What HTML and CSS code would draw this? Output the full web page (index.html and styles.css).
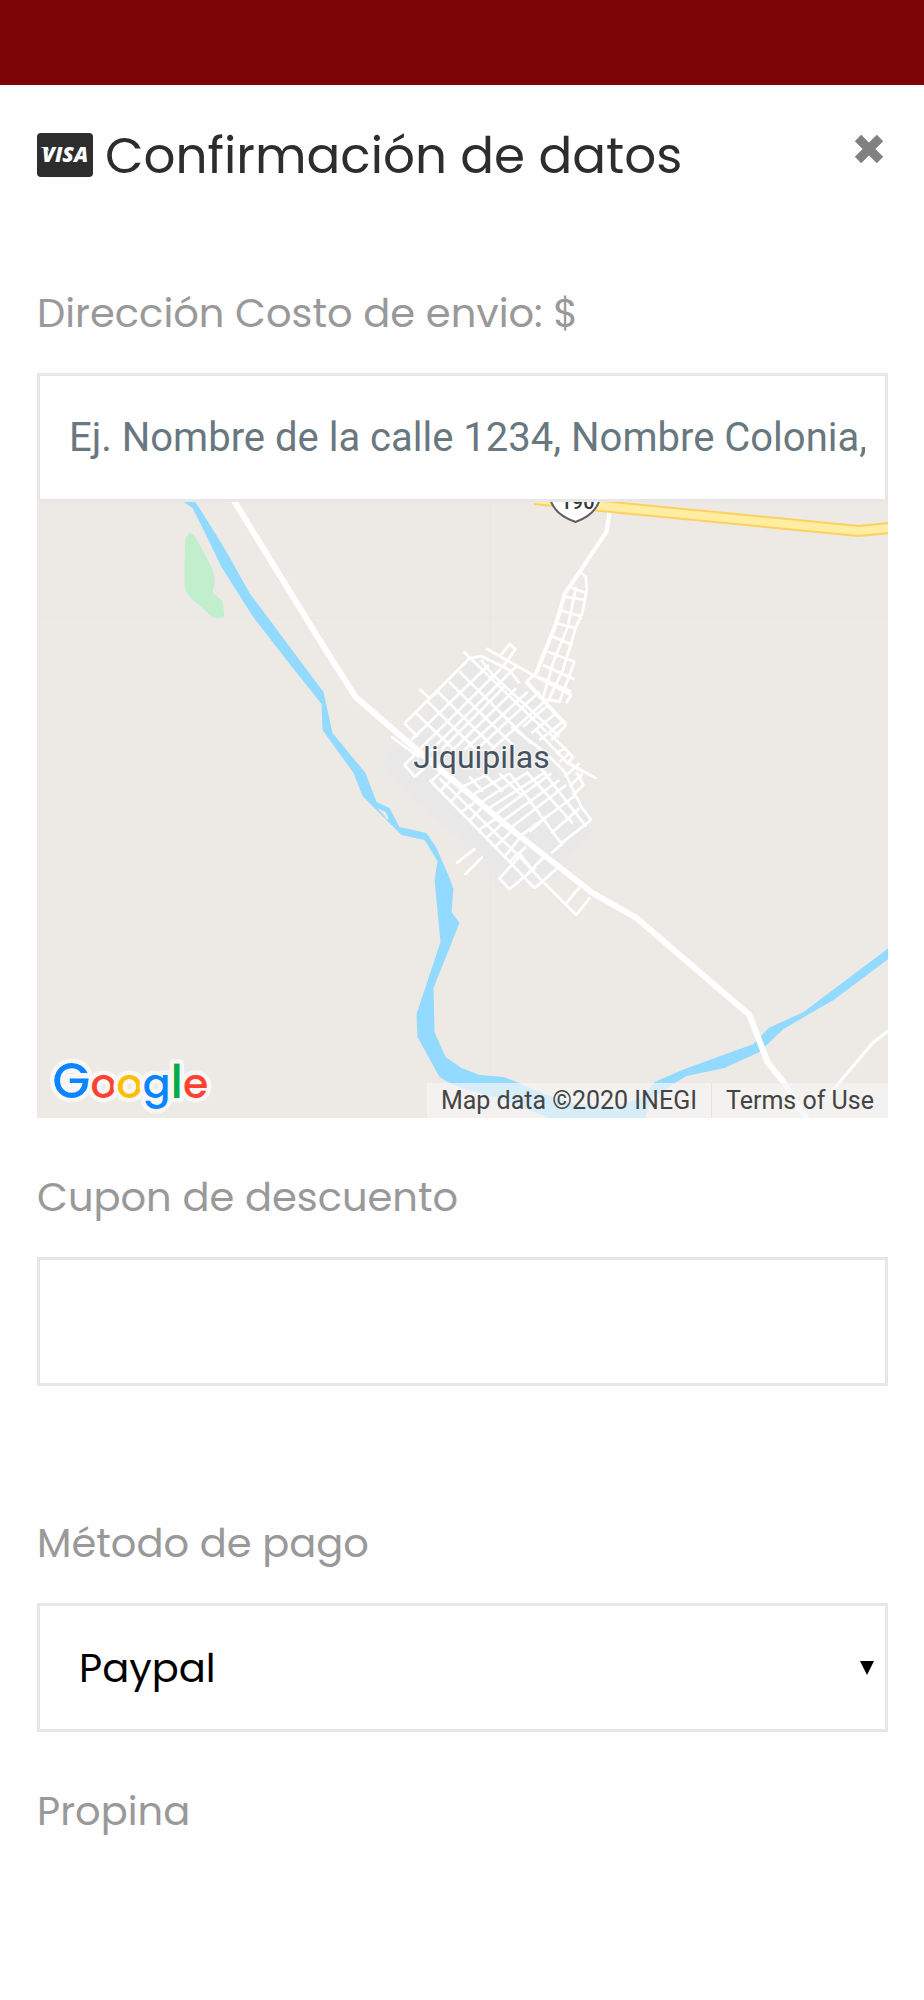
FILE: index.html
```html
<!DOCTYPE html>
<html lang="es">
<head>
<meta charset="utf-8">
<meta name="viewport" content="width=device-width, initial-scale=1">
<title>Confirmación de datos</title>
<link rel="stylesheet" href="styles.css">
</head>
<body>
<div class="topbar"></div>
<main class="sheet">
  <header class="header">
    <svg class="visa" viewBox="0 0 56 44" aria-hidden="true">
      <rect width="56" height="44" rx="4" fill="#2d2d2d"/>
      <path d="M3 14h8l1 4-3-2z" fill="#fff"/>
      <text class="visa-text" x="5" y="29">VISA</text>
    </svg>
    <h1 class="title">Confirmación de datos</h1>
    <button class="close" type="button" aria-label="Cerrar">
      <svg viewBox="0 0 30 30"><path d="M4 4L26 26M26 4L4 26" stroke="#808080" stroke-width="9"/></svg>
    </button>
  </header>
  <form class="form">
    <div class="field">
      <label class="label" for="address">Dirección Costo de envio: $</label>
      <input class="control address" id="address" type="text" placeholder="Ej. Nombre de la calle 1234, Nombre Colonia, Ciudad">
      <div class="map">
        <svg class="map-canvas" viewBox="37 502 852 616" preserveAspectRatio="xMidYMid slice" role="img" aria-label="Mapa de Jiquipilas">
          <defs><filter id="soft"><feGaussianBlur stdDeviation="4"/></filter></defs>
          <rect x="37" y="502" width="852" height="616" fill="#edeae5"/>
          <path d="M37 618H889M491 502V1118" stroke="#e9e7e2" stroke-width="1"/>
          <path fill="#c1eecd" d="M190 533Q193 533 195 536L203 550 212 567Q216 576 215 584L213 592 217 596 223 601 225 617Q219 619 213 617L190 597Q185 590 185 585V560L186 538Z"/>
          <path filter="url(#soft)" fill="#e8e8e8" d="M470 660L525 685 560 720 548 752 588 808 594 832 550 882 508 888 470 850 384 768 388 748 412 735Z"/>
          <path fill="#92daff" fill-rule="evenodd" d="M184 502H196L215 532 230 557 250 593 268 617 300 660 324 692 333 733 366 773 377 802 390 808 400 827 427 833 437 848 450 878 454 889 452 912 460 923 434 988 435 1032 446 1057 462 1068 480 1075 504 1077 517 1082 542 1093 575 1104 615 1106 642 1098 655 1082 685 1069 754 1044 769 1028 804 1012 889 948V959L834 1000 784 1029 760 1052 725 1068 687 1076 677 1082 654 1097 645 1118H550L499 1098 462 1088 448 1082 440 1077 418 1037 417 1014 441 942 435 880 438 861 425 840 402 835 363 796 354 773 323 730 322 704 287 660 253 616 222 567 200 522 193 508ZM378 808L386 812 389 818 388 820Z"/>
          <g transform="translate(360 620) scale(.33333)" fill="none" stroke="#fff" stroke-width="8" stroke-linejoin="round">
            <path d="M135 310L330 115M155 360L388 135M183 385L425 145M210 395L475 135M245 390L435 200M280 390L470 205M315 390L505 215M350 390L540 215M395 390L560 240M490 320L560 260M515 340L590 280M540 360L610 305M575 360L620 315"/>
            <path d="M135 310L175 350M170 280L285 390M205 245L350 390M180 208L210 235 235 215 405 385M268 185L465 380M300 155L515 370M312 95L560 335M330 115L365 108 450 150 480 190M380 85L520 165 635 225M425 105L450 72 468 88 430 140M365 120L400 165 600 350"/>
            <path d="M455 320L560 400 615 455 665 560 695 600M530 330L620 425 710 475M570 340L640 410 625 430 670 455M590 400L615 385M600 425L630 400M615 470L660 430M630 500L670 460M650 455L672 495 640 525"/>
            <path d="M215 485L245 455M245 510L275 480M275 545L315 500M300 580L345 548M328 605L370 560M355 632L410 595M380 655L430 610M408 680L460 630M435 710L480 655M300 505L380 465M330 530L450 460M360 550L500 460M380 570L560 455M400 590L575 460M420 610L600 480M445 630L620 495M480 650L650 525M510 635L545 605"/>
            <path d="M210 480L450 725 525 805M240 475L480 710 550 785M270 470L310 510M330 470L370 515M370 460L430 515M420 460L490 530M450 460L605 670M500 455L640 610M540 440L680 620M575 640L660 565M605 670L695 600M575 700L610 670"/>
            <path d="M450 725L500 680M480 710L420 775 450 808 530 740M495 770L560 705M525 805L590 748M550 785L650 885 692 832M620 850L660 802M95 350L180 412M165 405L135 435 165 470 195 445M290 730L348 685M315 765L370 710M480 700L530 765"/>
            <path d="M751 -330L741 -265 661 -145 616 -80 590 10 530 160 500 185M661 -145L679 -130 682 -90 668 -20 650 20 610 150 565 245M650 -100L625 20 580 130 550 235M645 125L600 245 560 238M635 225L620 250M630 -100L680 -80M615 -70L680 -60M600 -30L668 -10M592 10L650 25M580 50L640 75M565 95L645 125M550 135L645 178M535 170L635 215"/>
            <path d="M500 185L620 315M751 -330L741 -265 661 -145 616 -80 590 10 530 160" stroke-width="12"/>
          </g>
          <path fill="none" stroke="#fff" stroke-width="6" stroke-linejoin="round" d="M234 500L320 640 356 697 420 752 515 832 593 893 637 918 750 1015 768 1062 784 1082 808 1120"/>
          <path fill="none" stroke="#fff" stroke-width="3" d="M890 1030L874 1042 830 1094"/>
          <path fill="none" stroke="#ffd060" stroke-width="12" d="M535 499L602 506 859 531 890 528"/>
          <path fill="none" stroke="#ffeda1" stroke-width="8" d="M535 499L602 506 859 531 890 528"/>
          <path fill="#fff" stroke="#5f5f5f" stroke-width="2" d="M550 496Q553 514 576 522 598 514 601 496Z"/>
          <text class="road-number" x="578" y="509">190</text>
          <text class="town" x="482" y="768">Jiquipilas</text>
          <text class="google" x="53" y="1098"><tspan class="google-cap" fill="#0a84ff">G</tspan><tspan fill="#ff4131">o</tspan><tspan fill="#ffbd00">o</tspan><tspan fill="#0a84ff">g</tspan><tspan class="google-tall" fill="#00ac47">l</tspan><tspan fill="#ff4131">e</tspan></text>
        </svg>
        <div class="credits">
          <span class="credit">Map data ©2020 INEGI</span>
          <a class="credit" href="#terms">Terms of Use</a>
        </div>
      </div>
    </div>
    <div class="field field-coupon">
      <label class="label" for="coupon">Cupon de descuento</label>
      <input class="control" id="coupon" type="text">
    </div>
    <div class="field">
      <label class="label" for="payment">Método de pago</label>
      <div class="select-wrap">
        <select class="control select" id="payment"><option>Paypal</option></select>
        <svg class="arrow" viewBox="0 0 14 14" aria-hidden="true"><path d="M0 0H14L7 14Z"/></svg>
      </div>
    </div>
    <div class="field">
      <span class="label">Propina</span>
    </div>
  </form>
</main>
</body>
</html>
```
FILE: styles.css
```css
* { box-sizing: border-box; }

body {
  margin: 0;
  background: #fefefe;
  font-family: Poppins, Inter, sans-serif;
}

.topbar {
  height: 85px;
  background: #7d0507;
}

.sheet { padding: 39px 36px 40px 37px; }

.header {
  display: flex;
  align-items: flex-start;
  gap: 12px;
  padding-bottom: 95px;
}

.visa {
  width: 56px;
  height: 44px;
  margin-top: 9px;
}

.visa-text {
  font: italic 800 21px "Open Sans", sans-serif;
  fill: #fff;
}

.title {
  flex: 1;
  margin: 0;
  font-size: 50px;
  font-weight: 400;
  line-height: 64px;
  color: #2d2d2d;
}

.close {
  padding: 0;
  margin: 10px 4px 0 0;
  border: 0;
  background: none;
}

.close svg {
  display: block;
  width: 30px;
  height: 30px;
}

.form {
  display: flex;
  flex-direction: column;
  gap: 49px;
}

.field {
  display: flex;
  flex-direction: column;
}

.field-coupon { padding-bottom: 78px; }

.label {
  margin-bottom: 30px;
  font-size: 40px;
  font-weight: 400;
  line-height: 60px;
  color: #999;
}

.control {
  width: 100%;
  height: 129px;
  padding: 0 29px;
  border: 3px solid #e7e7e7;
  border-radius: 0;
  background: #fff;
  color: #000;
  font-family: Poppins, Inter, sans-serif;
  font-size: 40px;
}

.address {
  padding-right: 20px;
  font-family: Roboto, sans-serif;
}

.address::placeholder {
  color: #687780;
  opacity: 1;
}

.map {
  position: relative;
  height: 616px;
}

.map-canvas {
  display: block;
  width: 100%;
  height: 100%;
}

.road-number {
  font: 500 20px Roboto, sans-serif;
  text-anchor: middle;
  fill: #333;
}

.town {
  font: 32px Roboto, sans-serif;
  text-anchor: middle;
  fill: #465260;
  stroke: #f3f3f3;
  stroke-width: 3px;
  paint-order: stroke;
}

.google {
  font: 500 41px Poppins, Lato, sans-serif;
  stroke: #f8f7f5;
  stroke-width: 9px;
  stroke-linejoin: round;
  paint-order: stroke;
}

.google-cap { font-size: 49px; }

.google-tall { font-size: 47px; }

.credits {
  position: absolute;
  right: 0;
  bottom: 0;
  display: flex;
  background: rgba(245, 245, 245, 0.7);
}

.credit {
  padding: 0 14px;
  color: #444;
  font: 25px/35px Roboto, sans-serif;
  text-decoration: none;
}

.credit + .credit { border-left: 1px solid #e6e4e0; }

.select-wrap {
  display: grid;
  align-items: center;
}

.select-wrap > * { grid-area: 1 / 1; }

.select {
  appearance: none;
  padding: 0 39px;
}

.arrow {
  justify-self: end;
  width: 14px;
  height: 14px;
  margin-right: 14px;
  pointer-events: none;
}
```
